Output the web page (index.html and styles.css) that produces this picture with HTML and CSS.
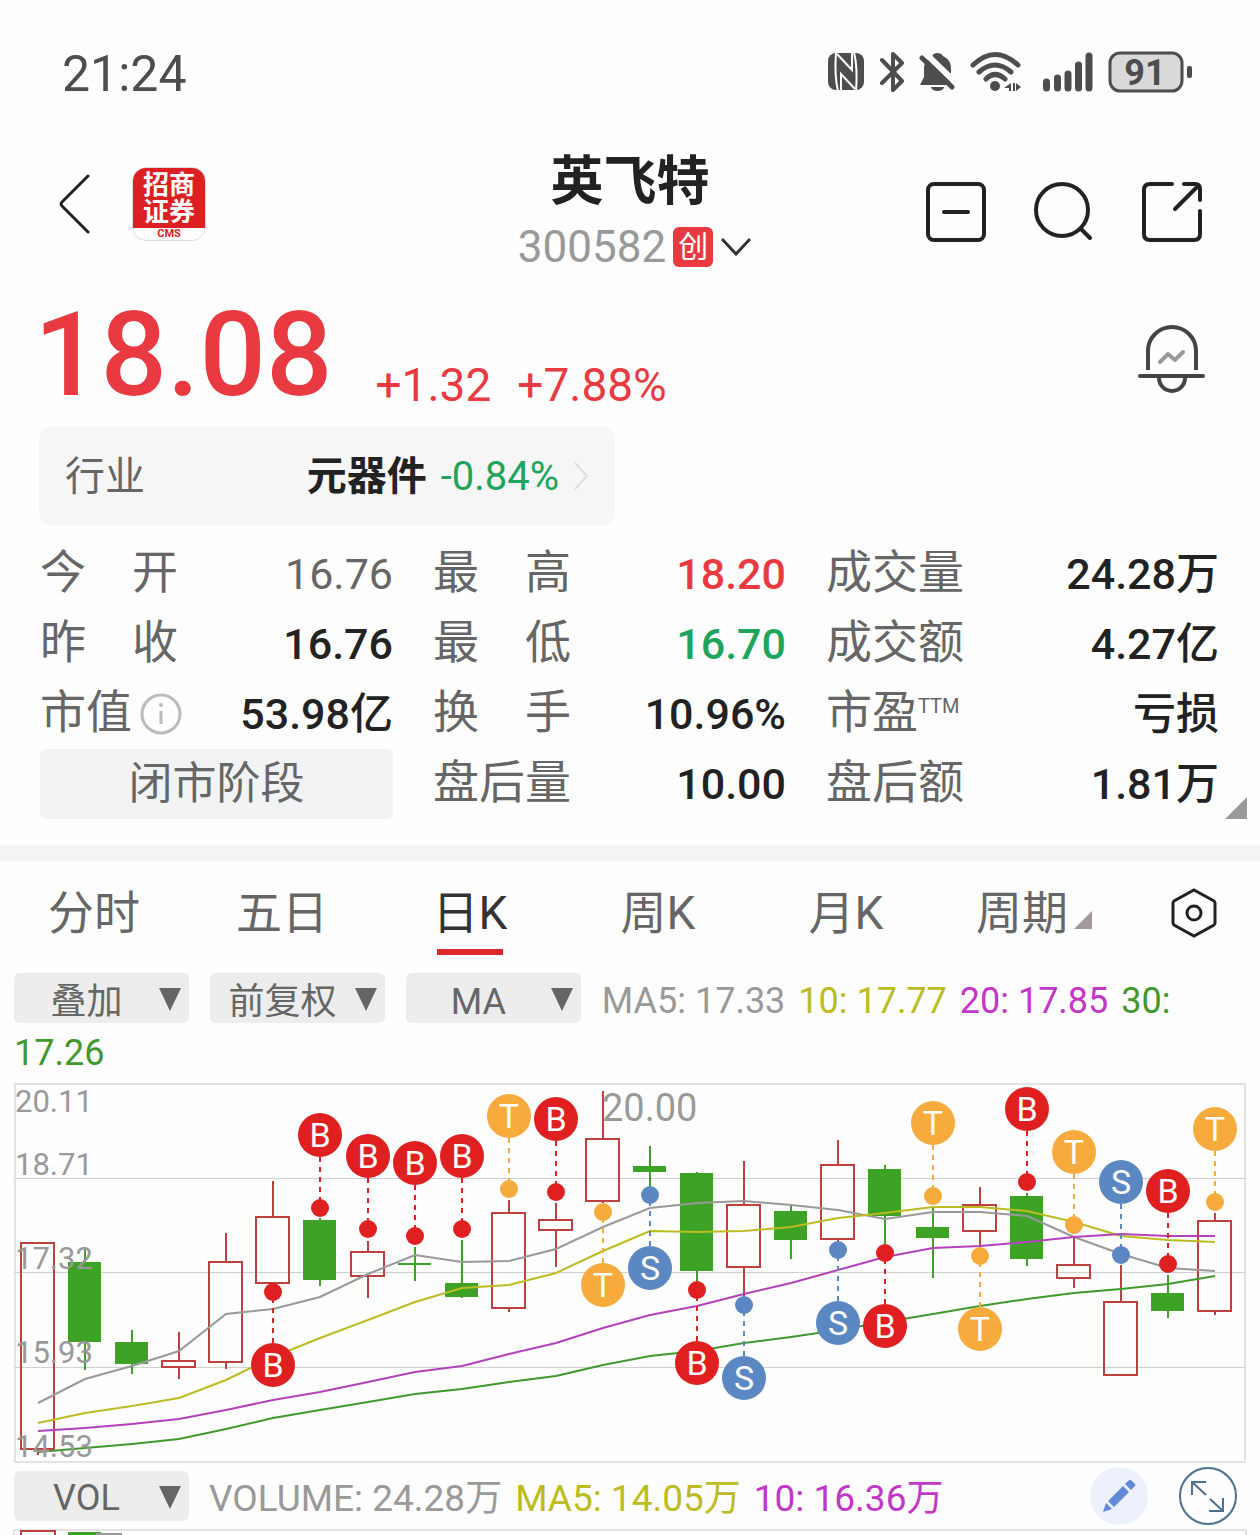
FILE: index.html
```html
<!DOCTYPE html>
<html lang="zh-CN">
<head>
    <meta charset="UTF-8">
    <meta name="viewport" content="width=device-width, initial-scale=1.0">
    <title>英飞特 300582</title>
    <link rel="stylesheet" href="styles.css">
</head>
<body>
    <div class="status-bar">
        <span class="clock">21:24</span>
        <div class="status-icons">
            <svg width="36" height="42" viewBox="0 0 36 42">
                <rect y="2" width="36" height="37" rx="8" fill="#4d4d4d"/>
                <path d="M8 1C7 15 7 28 10 40M26 1C29 14 29 28 28 40" fill="none" stroke="#fff" stroke-width="2"/>
                <path d="M9 3L24 19V2M27 38L13 23V39" fill="none" stroke="#fff" stroke-width="2"/>
            </svg>
            <svg width="25" height="42" viewBox="0 0 25 42">
                <path d="M3 9L23 30L14 39V3L23 12L3 32" fill="none" stroke="#4d4d4d" stroke-width="4" stroke-linecap="round" stroke-linejoin="round"/>
            </svg>
            <svg width="36" height="42" viewBox="0 0 36 42">
                <path d="M18 2C21 2 23 3 24 5C30 8 32 12 32 18V34H1L5 26V16C6 10 9 7 13 5C14 3 16 2 18 2ZM12 36H25A6.500 4 0 0 1 12 36Z" fill="#4d4d4d"/>
                <path d="M4 0L36 31" stroke="#fff" stroke-width="6"/>
                <path d="M3 7L33 36" stroke="#4d4d4d" stroke-width="5" stroke-linecap="round"/>
            </svg>
            <svg width="51" height="42" viewBox="0 0 51 42">
                <path d="M3 14Q25 -7 48 14M9 21Q25 7 41 21M16 28Q25 19 35 28" fill="none" stroke="#4d4d4d" stroke-width="5" stroke-linecap="round"/>
                <circle cx="25" cy="35" r="5" fill="#4d4d4d"/>
                <path d="M41 32V40H39V37H34ZM43 32H45V40H43ZM46 32L51 36L46 40Z" fill="#4d4d4d"/>
            </svg>
            <svg class="signal" width="50" height="42" viewBox="0 0 50 42">
                <path d="M3.500 31V37M14.500 27V37M25 23V37M35.500 14V37M46 5V37" stroke="#4d4d4d" stroke-width="7" stroke-linecap="round"/>
            </svg>
            <svg width="84" height="42" viewBox="0 0 84 42">
                <rect x="2" y="2" width="72" height="38" rx="10" fill="#d9d9d9" stroke="#4d4d4d" stroke-width="3"/>
                <rect x="79" y="15" width="5" height="12" rx="2" fill="#4d4d4d"/>
                <text x="37" y="34" class="battery-level">91</text>
            </svg>
        </div>
    </div>

    <header class="header">
        <div class="header-left">
            <button class="icon-btn" aria-label="返回">
                <svg width="32" height="60" viewBox="0 0 32 60">
                    <path d="M30 2L4 28Q2 30 4 32L30 58" fill="none" stroke="#222" stroke-width="3" stroke-linecap="round"/>
                </svg>
            </button>
            <a href="#" class="broker">
                <span class="broker-name">招商<br>证券</span>
                <span class="broker-code">CMS</span>
            </a>
        </div>
        <div class="stock">
            <h1>英飞特</h1>
            <button class="stock-code">
                300582
                <span class="board">创</span>
                <svg width="32" height="20" viewBox="0 0 32 20">
                    <path d="M2 2L16 17L30 2" fill="none" stroke="#333" stroke-width="3"/>
                </svg>
            </button>
        </div>
        <div class="header-right">
            <button class="icon-btn" aria-label="删除自选">
                <svg width="60" height="60" viewBox="0 0 60 60">
                    <rect x="2" y="2" width="56" height="56" rx="6"/>
                    <path d="M18 30H42"/>
                </svg>
            </button>
            <button class="icon-btn" aria-label="搜索">
                <svg width="60" height="60" viewBox="0 0 60 60">
                    <circle cx="28" cy="28" r="26"/>
                    <path d="M47 47L56 56"/>
                </svg>
            </button>
            <button class="icon-btn" aria-label="分享">
                <svg width="60" height="60" viewBox="0 0 60 60">
                    <path d="M30 2H8Q2 2 2 8V52Q2 58 8 58H52Q58 58 58 52V29M42 2H53Q58 2 58 7V18M56 4L33 27"/>
                </svg>
            </button>
        </div>
    </header>

    <section class="quote">
        <span class="price">18.08</span>
        <span class="change">+1.32</span>
        <span class="change">+7.88%</span>
        <button class="icon-btn alert-btn" aria-label="预警">
            <svg width="68" height="68" viewBox="0 0 68 68">
                <g fill="none" stroke="#444" stroke-width="4">
                    <path d="M10 45V26A24 24 0 0 1 58 26V45"/>
                    <path d="M2 51H65" stroke-linecap="round"/>
                    <path d="M21 53A13 13 0 0 0 47 53"/>
                </g>
                <path d="M22 37L30 29L37 35L45 27" fill="none" stroke="#999" stroke-width="4" stroke-linecap="round" stroke-linejoin="round"/>
            </svg>
        </button>
    </section>

    <a href="#" class="industry">
        <span class="industry-label">行业</span>
        <strong>元器件</strong>
        <span class="down">-0.84%</span>
        <svg width="16" height="30" viewBox="0 0 16 30">
            <path d="M2 2L14 15L2 28" fill="none" stroke="#ddd" stroke-width="2"/>
        </svg>
    </a>

    <dl class="stats">
        <div><dt>今　开</dt><dd class="flat">16.76</dd></div>
        <div><dt>最　高</dt><dd class="up">18.20</dd></div>
        <div><dt>成交量</dt><dd>24.28万</dd></div>
        <div><dt>昨　收</dt><dd>16.76</dd></div>
        <div><dt>最　低</dt><dd class="down">16.70</dd></div>
        <div><dt>成交额</dt><dd>4.27亿</dd></div>
        <div>
            <dt>市值
                <svg width="42" height="48" viewBox="0 0 42 48">
                    <circle cx="21" cy="26" r="19" fill="none" stroke="#bbb" stroke-width="3"/>
                    <circle cx="21" cy="17" r="2" fill="#bbb"/>
                    <path d="M21 23V36" stroke="#bbb" stroke-width="3"/>
                </svg>
            </dt>
            <dd>53.98亿</dd>
        </div>
        <div><dt>换　手</dt><dd>10.96%</dd></div>
        <div><dt>市盈<sup>TTM</sup></dt><dd>亏损</dd></div>
        <div><span class="phase">闭市阶段</span></div>
        <div><dt>盘后量</dt><dd>10.00</dd></div>
        <div><dt>盘后额</dt><dd>1.81万</dd></div>
    </dl>

    <nav class="tabs">
        <a href="#">分时</a>
        <a href="#">五日</a>
        <a href="#" class="active">日K</a>
        <a href="#">周K</a>
        <a href="#">月K</a>
        <a href="#" class="more">周期</a>
        <button class="icon-btn" aria-label="设置">
            <svg width="48" height="52" viewBox="0 0 48 52">
                <path d="M24 3L44 14Q45 15 45 16V36Q45 37 44 38L24 49L4 38Q3 37 3 36V16Q3 15 4 14Z"/>
                <circle cx="24" cy="26" r="7"/>
            </svg>
        </button>
    </nav>

    <div class="toolbar">
        <label class="picker"><select aria-label="叠加"><option>叠加</option></select></label>
        <label class="picker"><select aria-label="复权"><option>前复权</option></select></label>
        <label class="picker"><select aria-label="主图指标"><option>MA</option></select></label>
        <span class="ma5">MA5: 17.33</span>
        <span class="ma10">10: 17.77</span>
        <span class="ma20">20: 17.85</span>
        <span class="ma30">30:</span>
        <span class="ma30">17.26</span>
    </div>

    <svg class="chart" id="kline" viewBox="0 0 1232 380"></svg>

    <div class="volume-bar">
        <label class="picker"><select aria-label="副图指标"><option>VOL</option></select></label>
        <span class="ma5">VOLUME: 24.28万</span>
        <span class="vol5">MA5: 14.05万</span>
        <span class="ma20">10: 16.36万</span>
        <div class="chart-tools">
            <button class="icon-btn" aria-label="画线">
                <svg width="58" height="58" viewBox="0 0 58 58">
                    <circle cx="29" cy="29" r="29" fill="#edf1fb"/>
                    <path d="M18 34L33 19L39 25L24 40ZM35 17L38 14Q40 12 42 14L45 17Q46 19 44 20L41 23ZM16 36L22 42L13 45Z" fill="#6289d8"/>
                </svg>
            </button>
            <button class="icon-btn" aria-label="全屏">
                <svg width="58" height="58" viewBox="0 0 58 58">
                    <g fill="none" stroke="#4c7090" stroke-width="2">
                        <circle cx="29" cy="29" r="28"/>
                        <path d="M13 28V15H27M13 15L27 28M44 31V44H30M44 44L31 32"/>
                    </g>
                </svg>
            </button>
        </div>
    </div>

    <svg class="chart" id="volume" viewBox="0 0 1232 6">
        <path d="M0 6V1H1232V6" class="frame"/>
        <path d="M7 6V2H41V6" class="rise"/>
        <rect x="54" y="3" width="33" height="3" class="fall"/>
        <path d="M82 5H108" class="line-ma5"/>
    </svg>

    <script>
        // [high, body top, body bottom, low, rising]
        const candles = [
            [160, 160, 366, 372, 1], [164, 179, 259, 287, 0], [247, 259, 281, 291, 0],
            [249, 278, 284, 296, 1], [150, 179, 279, 286, 1], [98, 134, 200, 200, 1],
            [135, 137, 197, 203, 0], [158, 169, 193, 215, 1], [164, 180, 182, 198, 0],
            [157, 200, 214, 215, 0], [117, 130, 225, 229, 1], [120, 137, 147, 184, 1],
            [8, 56, 118, 120, 1], [63, 83, 89, 104, 0], [89, 90, 188, 200, 0],
            [78, 122, 184, 214, 1], [122, 128, 157, 176, 0], [57, 82, 156, 162, 1],
            [82, 86, 133, 167, 0], [124, 144, 155, 195, 0], [104, 122, 148, 164, 1],
            [110, 113, 176, 183, 0], [154, 182, 195, 205, 1], [182, 219, 292, 292, 1],
            [192, 210, 228, 235, 0], [130, 138, 228, 232, 1]
        ];
        const averages = {
            ma5: [320, 296, 283, 268, 231, 226, 214, 191, 172, 179, 178, 166, 144, 125, 120, 118, 122, 127, 136, 129, 129, 133, 154, 171, 185, 188],
            ma10: [340, 330, 323, 315, 297, 274, 255, 237, 219, 205, 202, 190, 168, 148, 149, 148, 144, 135, 130, 124, 124, 128, 139, 153, 157, 159],
            ma20: [348, 345, 341, 336, 327, 317, 309, 299, 289, 283, 271, 260, 245, 232, 223, 211, 200, 187, 174, 165, 163, 159, 154, 151, 153, 153],
            ma30: [369, 365, 361, 356, 346, 335, 327, 319, 311, 306, 299, 293, 282, 273, 268, 260, 254, 247, 239, 231, 223, 216, 210, 206, 201, 193]
        };
        // [candle, type, dot y, side: -1 above, 1 below]
        const marks = [
            [5, 'B', 209, 1], [6, 'B', 125, -1], [7, 'B', 146, -1], [8, 'B', 153, -1],
            [9, 'B', 146, -1], [10, 'T', 106, -1], [11, 'B', 109, -1], [12, 'T', 129, 1],
            [13, 'S', 112, 1], [14, 'B', 207, 1], [15, 'S', 222, 1], [17, 'S', 167, 1],
            [18, 'B', 170, 1], [19, 'T', 113, -1], [20, 'T', 173, 1], [21, 'B', 99, -1],
            [22, 'T', 142, -1], [23, 'S', 172, -1], [24, 'B', 181, -1], [25, 'T', 119, -1]
        ];
        const x = i => Math.round(24 + i * 47.08);

        let out = '<rect x="1" y="1" width="1230" height="378" class="frame"/>';
        out += '<path d="M0 95.5H1232M0 189.5H1232M0 284.5H1232" class="grid"/>';

        candles.forEach(([high, top, bottom, low, rising], i) => {
            const cls = rising ? 'rise' : 'fall';
            out += `<path d="M${x(i)} ${high}V${top}M${x(i)} ${bottom}V${low}" class="${cls}"/>`;
            out += rising
                ? `<rect x="${x(i) - 17}" y="${top}" width="33" height="${bottom - top}" class="rise"/>`
                : `<rect x="${x(i) - 17}" y="${top}" width="33" height="${bottom - top}" class="fall body"/>`;
        });

        for (const name in averages) {
            const points = averages[name].map((y, i) => `${x(i)},${y}`).join(' ');
            out += `<polyline points="${points}" class="line-${name}"/>`;
        }

        [['20.11', 29], ['18.71', 92], ['17.32', 186], ['15.93', 280], ['14.53', 374]].forEach(([t, y]) => {
            out += `<text x="1" y="${y}" class="axis">${t}</text>`;
        });
        out += '<text x="588" y="38" class="peak">20.00</text>';

        marks.forEach(([i, type, y, side]) => {
            const cx = x(i);
            const cy = y + side * 73;
            out += `<g class="mark mark-${type}">
                <path d="M${cx} ${cy - side * 22}V${y}"/>
                <circle cx="${cx}" cy="${y}" r="9"/>
                <circle cx="${cx}" cy="${cy}" r="22"/>
                <text x="${cx}" y="${cy + 12}">${type}</text>
            </g>`;
        });

        document.getElementById('kline').innerHTML = out;
    </script>
</body>
</html>
```
FILE: styles.css
```css
* {
    box-sizing: border-box;
}
body {
    margin: 0;
    background-color: #fefefe;
    color: #222;
    font-family: Roboto, "Noto Sans CJK SC", sans-serif;
}
a {
    color: inherit;
    text-decoration: none;
}
button, select {
    padding: 0;
    border: none;
    background: none;
    color: inherit;
    font: inherit;
    cursor: pointer;
}
svg {
    display: block;
}

.status-bar {
    display: flex;
    align-items: center;
    justify-content: space-between;
    height: 144px;
    padding: 0 68px 0 62px;
}
.clock {
    padding-top: 3px;
    color: #4d4d4d;
    font-size: 50px;
}
.status-icons {
    display: flex;
    align-items: center;
    gap: 15px;
}
.signal {
    margin-left: 7px;
}
.battery-level {
    fill: #4d4d4d;
    font-size: 36px;
    font-weight: 700;
    text-anchor: middle;
}

.header {
    display: grid;
    grid-template-columns: 1fr auto 1fr;
    height: 146px;
    padding: 0 58px;
}
.header-left {
    display: flex;
    align-items: center;
    gap: 42px;
    height: 120px;
}
.header-right {
    display: flex;
    align-items: center;
    justify-content: flex-end;
    gap: 48px;
    height: 136px;
}
.header-right svg, .tabs svg {
    fill: none;
    stroke: #222;
    stroke-width: 4;
    stroke-linecap: round;
}
.tabs svg {
    stroke-width: 3;
}
.broker {
    display: flex;
    flex-direction: column;
    width: 74px;
    height: 74px;
    border: 1px solid #ddd;
    border-radius: 14px;
    overflow: hidden;
    text-align: center;
    font-weight: 700;
}
.broker-name {
    flex: 1;
    background-color: #dc1f22;
    color: #fff;
    font-size: 26px;
    line-height: 27px;
    padding-top: 4px;
}
.broker-code {
    color: #dc1f22;
    font-size: 11px;
    line-height: 12px;
}
.stock {
    text-align: center;
}
.stock h1 {
    margin: 0;
    padding-top: 2px;
    font-size: 53px;
    line-height: 72px;
}
.stock-code {
    display: flex;
    align-items: center;
    gap: 7px;
    margin-left: 10px;
    color: #999;
    font-size: 44px;
    line-height: 58px;
}
.board {
    width: 40px;
    border-radius: 6px;
    background-color: #e83a40;
    color: #fff;
    font-size: 30px;
    line-height: 40px;
}

.quote {
    display: flex;
    align-items: flex-start;
    height: 137px;
    padding: 0 54px 0 34px;
    color: #e83a40;
}
.price {
    margin-right: 43px;
    font-size: 117px;
    font-weight: 500;
    line-height: 130px;
}
.change {
    margin: 72px 26px 0 0;
    font-size: 46px;
    line-height: 46px;
}
.alert-btn {
    align-self: center;
    margin-left: auto;
}

.industry {
    display: flex;
    align-items: center;
    gap: 14px;
    width: 576px;
    height: 98px;
    margin-left: 39px;
    padding: 0 26px;
    border-radius: 12px;
    background-color: #f6f6f6;
    color: #666;
    font-size: 40px;
}
.industry strong {
    margin-left: auto;
    color: #222;
}
.industry-label, .industry strong {
    padding-bottom: 6px;
}

.stats {
    position: relative;
    display: grid;
    grid-template-columns: repeat(3, 1fr);
    margin: 0;
    padding: 14px 41px 26px 40px;
    border-bottom: 16px solid #f3f4f6;
    line-height: 70px;
}
.stats div {
    display: flex;
    justify-content: space-between;
    height: 70px;
    padding-right: 40px;
}
.stats div:nth-child(3n) {
    padding-right: 0;
}
.stats dt {
    display: flex;
    align-items: center;
    gap: 8px;
    padding-bottom: 5px;
    color: #666;
    font-size: 46px;
}
.stats sup {
    align-self: flex-start;
    margin-left: -8px;
    font-size: 20px;
    line-height: 54px;
}
.stats dd {
    margin: 0;
    font-size: 43px;
    font-weight: 500;
}
.stats::after {
    content: "";
    position: absolute;
    right: 13px;
    bottom: 26px;
    border-left: 22px solid transparent;
    border-bottom: 22px solid #999;
}
.stats .flat {
    color: #666;
    font-weight: 400;
}
.up {
    color: #e83a40;
}
.down {
    color: #1fa45b;
}
.phase {
    flex: 1;
    border-radius: 6px;
    background-color: #f2f3f5;
    color: #666;
    font-size: 44px;
    text-align: center;
}

.tabs {
    display: grid;
    grid-template-columns: repeat(6, 188fr) 132fr;
    align-items: center;
    justify-items: center;
    height: 104px;
    color: #666;
    font-size: 46px;
    line-height: 84px;
}
.tabs .active {
    position: relative;
    color: #333;
}
.tabs .active::after {
    content: "";
    position: absolute;
    left: 50%;
    bottom: 0;
    width: 66px;
    height: 6px;
    margin-left: -33px;
    background-color: #d82a2a;
}
.more::after {
    content: "";
    display: inline-block;
    margin-left: 6px;
    border-left: 18px solid transparent;
    border-bottom: 18px solid #a39999;
}

.toolbar {
    padding: 8px 14px 4px;
    font-size: 36px;
    line-height: 52px;
}
.picker {
    position: relative;
    display: inline-block;
    width: 175px;
    height: 50px;
    margin-right: 12px;
    overflow: hidden;
    vertical-align: -10px;
    font-size: 36px;
}
.picker select {
    display: block;
    width: 175px;
    height: 50px;
    padding: 3px 30px 0 0;
    border-radius: 6px;
    background-color: #ededed;
    color: #666;
    appearance: none;
    text-align: center;
    text-align-last: center;
}
.picker::after {
    content: "";
    position: absolute;
    top: 15px;
    right: 8px;
    border: 11px solid transparent;
    border-top: 23px solid #666;
    border-bottom: 0;
    pointer-events: none;
}
.toolbar span {
    margin-right: 4px;
}
.ma5 {
    color: #999;
}
.ma10, .vol5 {
    color: #bcbc22;
}
.ma20 {
    color: #c236c8;
}
.ma30 {
    color: #41992e;
}

.chart {
    width: calc(100% - 28px);
    margin: 0 14px;
    overflow: visible;
}
.frame {
    fill: none;
    stroke: #e3e3e3;
    stroke-width: 2;
}
.grid {
    stroke: #d0d0d0;
}
.rise {
    fill: none;
    stroke: #c04040;
    stroke-width: 2;
}
.fall {
    fill: #3ea226;
    stroke: #3ea226;
    stroke-width: 2;
}
.body, #volume .fall {
    stroke: none;
}
.line-ma5, .line-ma10, .line-ma20, .line-ma30 {
    fill: none;
    stroke: #999;
    stroke-width: 2;
}
.line-ma10 {
    stroke: #bcbc22;
}
.line-ma20 {
    stroke: #b342ba;
}
.line-ma30 {
    stroke: #41992e;
}
.axis, .peak {
    fill: #999;
    font-size: 31px;
}
.peak {
    font-size: 38px;
}
.mark text {
    fill: #fff;
    font-size: 34px;
    text-anchor: middle;
}
.mark path {
    stroke-width: 2;
    stroke-dasharray: 5 5;
}
.mark-B {
    fill: #e02020;
    stroke: #e02020;
}
.mark-T {
    fill: #f7ab3c;
    stroke: #f7ab3c;
}
.mark-S {
    fill: #5b88c3;
    stroke: #5b88c3;
}
.mark circle, .mark text {
    stroke: none;
}

.volume-bar {
    display: flex;
    align-items: center;
    height: 66px;
    padding: 0 23px 0 14px;
    font-size: 37px;
}
.volume-bar > span {
    margin: 0 5px 0 8px;
    padding-bottom: 3px;
}
.chart-tools {
    display: flex;
    gap: 31px;
    margin-left: auto;
}
```
